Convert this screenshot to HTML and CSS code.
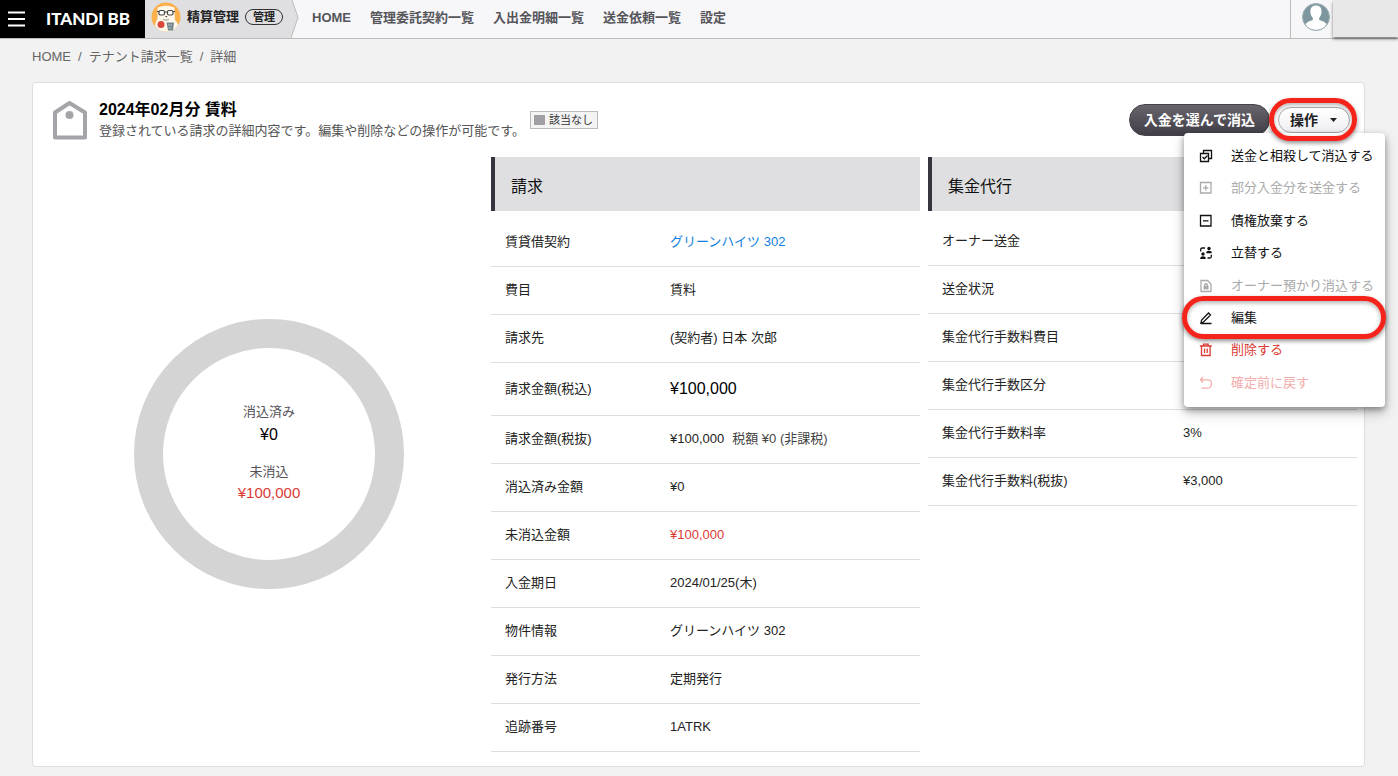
FILE: index.html
```html
<!DOCTYPE html>
<html lang="ja">
<head>
<meta charset="utf-8">
<meta name="viewport" content="width=device-width, initial-scale=1">
<title>テナント請求 詳細 | ITANDI BB</title>
<link rel="stylesheet" href="styles.css">
</head>
<body>
<header class="topbar">
  <div class="brand">
    <button class="burger" type="button" aria-label="メニュー"><svg width="17" height="16" viewBox="0 0 17 16" stroke="#fff" stroke-width="2"><path d="M0 1.5h17M0 8h17M0 14.5h17"/></svg></button>
    <a class="logo" href="#">ITANDI BB</a>
  </div>
  <div class="product">
    <svg width="30" height="30" viewBox="0 0 30 30" aria-hidden="true">
      <circle cx="15" cy="15" r="14.5" fill="#fbb04c"/>
      <path d="M6.500 8Q6 4.500 8.500 5Q15 2.500 21.500 5Q24 4.500 23.500 8L24 18Q27 21 27 23.500Q22 29.500 15 29.500Q8 29.500 4 24Q4 20 6.500 17Z" fill="#fdf8ea"/>
      <g fill="#fff" stroke="#444" stroke-width="1.200"><rect x="8" y="8.500" width="5.500" height="4.500" rx="1.500"/><rect x="16.500" y="8.500" width="5.500" height="4.500" rx="1.500"/><path d="M6 9.500h2M13.500 10h3M22 9.500h2"/></g>
      <path d="M14 14h2.500l-1.200 1.500z" fill="#444"/><path d="M12 17.500q3 1.500 6 0" fill="none" stroke="#999"/>
      <circle cx="10" cy="22.500" r="3.500" fill="#d9483b"/>
      <path d="M15.500 20.500h7.500l-1 8h-5z" fill="#71858c"/><path d="M17 23h4M17.500 26h3" stroke="#b9c4c8"/>
    </svg>
    <span class="product-name">精算管理</span>
    <span class="pill">管理</span>
  </div>
  <svg class="arrow" width="8" height="38" viewBox="0 0 8 38" aria-hidden="true"><path d="M0 0h1l6 17.500L0 38z" fill="#dfdfe2"/><path d="M1 0l6 17.500L0 38" fill="none" stroke="#bbb"/></svg>
  <nav class="nav">
    <a href="#">HOME</a><a href="#">管理委託契約一覧</a><a href="#">入出金明細一覧</a><a href="#">送金依頼一覧</a><a href="#">設定</a>
  </nav>
  <div class="user">
    <svg width="28" height="28" viewBox="0 0 28 28" aria-label="ユーザー"><defs><clipPath id="u"><circle cx="14" cy="14" r="13"/></clipPath></defs><circle cx="14" cy="14" r="13.500" fill="#7e979f"/><g clip-path="url(#u)" fill="#fff"><path d="M14 2.500c4 0 5.800 2.500 5.500 6.500-.2 3-1.200 4.500-2.300 6v2c3 1 7 2 7.800 5.500V28H3v-5.500C4 19 8 18 10.800 17v-2c-1.200-1.500-2.200-3-2.400-6C8.200 5 10 2.500 14 2.500z"/></g><circle cx="14" cy="14" r="13.500" fill="none" stroke="#9fb0b6"/></svg>
  </div>
  <div class="account"></div>
</header>

<main class="main">
  <nav class="crumbs" aria-label="パンくず"><a href="#">HOME</a><span>/</span><a href="#">テナント請求一覧</a><span>/</span><span>詳細</span></nav>

  <section class="card">
    <div class="card-head">
      <svg class="tag" width="36" height="40" viewBox="0 0 36 40" aria-hidden="true"><path d="M3 12.500L17.500 3 33 12.500V37.500H3z" fill="none" stroke="#a5a5a9" stroke-width="4" stroke-linejoin="round"/><circle cx="17.500" cy="15" r="4" fill="#a5a5a9"/></svg>
      <div>
        <h1>2024年02月分 賃料</h1>
        <p class="lead">登録されている請求の詳細内容です。編集や削除などの操作が可能です。</p>
      </div>
      <span class="status">該当なし</span>
      <div class="actions">
        <button class="primary" type="button">入金を選んで消込</button>
        <div class="dropdown">
          <button class="toggle" type="button" aria-haspopup="menu" aria-expanded="true">操作<svg width="7" height="4" viewBox="0 0 7 4"><path d="M0 0h7L3.500 4z" fill="#222"/></svg></button>
          <span class="ring ring-toggle"></span>
          <div class="menu">
            <div>
              <button type="button"><svg viewBox="0 0 14 14"><path d="M1.500 4.500h8v8h-8zM4.500 4V1.500h8v8H10"/><path d="M3.500 8l1.800 1.800L8.500 6.500"/></svg>送金と相殺して消込する</button>
              <button type="button" disabled><svg viewBox="0 0 14 14"><path d="M1.500 1.500h10.500v10.500H1.500zM6.800 4v5.500M4 6.800h5.500"/></svg>部分入金分を送金する</button>
            </div>
            <div>
              <button type="button"><svg viewBox="0 0 14 14"><path d="M1.500 1.500h10.500v10.500H1.500zM4 6.800h5.500"/></svg>債権放棄する</button>
              <button type="button"><svg viewBox="0 0 14 14"><g class="solid"><circle cx="4" cy="8" r="1.700"/><path d="M1.300 13v-1.500q2.700-2.300 5.400 0V13z"/><circle cx="10" cy="2.500" r="1.700"/><path d="M7.300 7.300V5.800q2.700-2.300 5.400 0v1.500z"/></g><path d="M1.700 5.500V3.500q0-1.500 1.500-1.500H6M12.300 8.800v1.700q0 1.500-1.500 1.500H8.500"/></svg>立替する</button>
            </div>
            <div>
              <button type="button" disabled><svg viewBox="0 0 14 14"><path d="M2 1.500h6.500l3.500 3.500v7.500H2zM5.700 7V5.500q1.300-1.500 2.600 0V7"/><path class="solid" d="M4.500 6.800h5V10.500h-5z"/></svg>オーナー預かり消込する</button>
              <button class="current" type="button"><svg viewBox="0 0 14 14"><path d="M2 12l.6-3L9.500 2l2 2-7 7zM2 12.500h10.500"/></svg>編集<span class="ring ring-item"></span></button>
              <button class="danger" type="button"><svg viewBox="0 0 14 14"><path d="M.8 3h12M4.500 3V1.200h4.600V3M2.500 3v9.500h8.600V3M5.500 5.500v4.500M8.200 5.500v4.500"/></svg>削除する</button>
            </div>
            <div>
              <button class="danger" type="button" disabled><svg viewBox="0 0 14 14"><path d="M4 1L1.500 3.800 4 6.500M1.500 3.800H9q3.500 0 3.500 4t-3.500 4.400H2.500"/></svg>確定前に戻す</button>
            </div>
          </div>
        </div>
      </div>
    </div>

    <div class="columns">
      <div class="chart">
        <div class="donut">
          <div class="dlabel">消込済み</div>
          <div class="dvalue">¥0</div>
          <div class="dlabel second">未消込</div>
          <div class="drest">¥100,000</div>
        </div>
      </div>
      <section class="billing">
        <h2>請求</h2>
        <table>
          <tr><th scope="row">賃貸借契約</th><td><a class="link" href="#">グリーンハイツ 302</a></td></tr>
          <tr><th scope="row">費目</th><td>賃料</td></tr>
          <tr><th scope="row">請求先</th><td>(契約者) 日本 次郎</td></tr>
          <tr class="total"><th scope="row">請求金額(税込)</th><td>¥100,000</td></tr>
          <tr><th scope="row">請求金額(税抜)</th><td>¥100,000<span class="tax">税額 ¥0 (非課税)</span></td></tr>
          <tr><th scope="row">消込済み金額</th><td>¥0</td></tr>
          <tr><th scope="row">未消込金額</th><td class="red">¥100,000</td></tr>
          <tr><th scope="row">入金期日</th><td>2024/01/25(木)</td></tr>
          <tr><th scope="row">物件情報</th><td>グリーンハイツ 302</td></tr>
          <tr><th scope="row">発行方法</th><td>定期発行</td></tr>
          <tr><th scope="row">追跡番号</th><td>1ATRK</td></tr>
        </table>
      </section>
      <section class="agency">
        <h2>集金代行</h2>
        <table>
          <tr><th scope="row">オーナー送金</th><td></td></tr>
          <tr><th scope="row">送金状況</th><td></td></tr>
          <tr><th scope="row">集金代行手数料費目</th><td></td></tr>
          <tr><th scope="row">集金代行手数区分</th><td></td></tr>
          <tr><th scope="row">集金代行手数料率</th><td>3%</td></tr>
          <tr><th scope="row">集金代行手数料(税抜)</th><td>¥3,000</td></tr>
        </table>
      </section>
    </div>
  </section>
</main>
</body>
</html>
```

FILE: styles.css
```css
* { box-sizing: border-box; }
body {
  margin: 0;
  background: #f2f2f2;
  color: #222;
  font: 13px/18px "Liberation Sans", "Noto Sans CJK JP", sans-serif;
}
a { color: inherit; text-decoration: none; }
button { font: inherit; color: inherit; border: 0; background: none; padding: 0; cursor: pointer; }
h1, h2, p { margin: 0; }
svg { display: block; flex: none; }

.topbar {
  display: flex;
  height: 39px;
  background: #f7f7fa;
  border-bottom: 1px solid #bbb;
}
.brand {
  display: flex;
  align-items: center;
  gap: 21px;
  width: 145px;
  padding: 0 0 1px 8px;
  background: #000;
}
.logo { color: #fff; font: 900 17px/20px Lato, sans-serif; white-space: nowrap; }
.product {
  display: flex;
  align-items: center;
  gap: 6px;
  padding: 0 8px 4px 6px;
  background: #dfdfe2;
  font-weight: 700;
  color: #222;
  white-space: nowrap;
}
.pill {
  padding: 0 7px;
  border: 1px solid #333;
  border-radius: 8px;
  font-size: 11px;
  line-height: 14px;
}
.nav {
  display: flex;
  align-items: center;
  gap: 19px;
  padding: 0 0 3px 13px;
  font-weight: 700;
  color: #55555a;
  white-space: nowrap;
}
.user {
  margin-left: auto;
  padding: 3px 3px 0 11px;
  border-left: 1px solid #bbb;
}
.account { width: 65px; height: 37px; background: #e8e8e8; box-shadow: 0 2px 3px rgba(0, 0, 0, .5); }

.main { padding: 0 33px 8px 32px; }
.crumbs { display: flex; gap: 7px; padding: 9px 0 16px; color: #666; }

.card {
  background: #fff;
  border: 1px solid #ddd;
  border-radius: 4px;
  padding-bottom: 14px;
}
.card-head { display: flex; height: 74px; padding: 17px 14px 0 19px; white-space: nowrap; }
.tag { margin-right: 11px; }
h1 { font-size: 16px; line-height: 20px; color: #000; }
.lead { line-height: 22px; color: #555; }
.status {
  display: flex;
  align-items: center;
  gap: 4px;
  height: 18px;
  margin: 11px 0 0 5px;
  padding: 0 4px 0 3px;
  background: #f4f4f5;
  border: 1px solid #bbb;
  font-size: 11px;
  color: #333;
}
.status::before { content: ""; width: 11px; height: 10px; background: #a0a0a5; }

.actions { display: flex; align-items: center; gap: 8px; height: 32px; margin: 4px 0 0 auto; }
.primary {
  height: 32px;
  padding: 0 14px 1px;
  border-radius: 16px;
  background: linear-gradient(#68656d, #413e47);
  border: 1px solid #45424a;
  color: #fff;
  font-size: 14px;
  font-weight: 700;
}
.dropdown { position: relative; }
.toggle {
  display: flex;
  align-items: center;
  gap: 12px;
  height: 26px;
  padding: 0 12px 1px 11px;
  border: 1px solid #aaa;
  border-radius: 13px;
  background: linear-gradient(#fff, #f0f0f4);
  font-size: 14px;
  font-weight: 700;
}
.ring {
  position: absolute;
  z-index: 2;
  border: 5px solid #f5241b;
  border-radius: 22px;
  box-shadow: 0 2px 4px rgba(0, 0, 0, .45), inset 0 2px 4px rgba(0, 0, 0, .3);
  pointer-events: none;
}
.ring-toggle { inset: -9px -7px -8px -9px; }
.ring-item { inset: -5px -1px -6px -2px; }
.menu {
  position: absolute;
  z-index: 1;
  top: 26px;
  right: -35px;
  display: grid;
  gap: 1px;
  width: 201px;
  padding: 6px 0 9px;
  background: #fff;
  border-radius: 4px;
  box-shadow: 0 3px 6px rgba(0, 0, 0, .35), 0 6px 14px rgba(0, 0, 0, .2);
}
.menu button {
  position: relative;
  display: flex;
  align-items: center;
  gap: 18px;
  width: 100%;
  height: 32px;
  padding: 2px 0 0 15px;
  color: #111;
}
.menu svg { width: 14px; height: 14px; fill: none; stroke: currentColor; stroke-width: 1.3; }
.menu .solid { fill: currentColor; stroke: none; }
.menu button:disabled { color: #aaa; }
.menu .danger { color: #dc3a34; }
.menu .danger:disabled { color: #f2aeac; }

.columns { display: grid; grid-template-columns: 450fr 429fr 429fr; gap: 8px; padding-right: 7px; }
.chart { display: flex; align-items: center; justify-content: center; padding: 0 0 2px 22px; }
.donut {
  width: 270px;
  height: 270px;
  padding-top: 54px;
  border: 29px solid #d4d4d4;
  border-radius: 50%;
  text-align: center;
}
.dlabel { line-height: 20px; color: #55525a; }
.dvalue { font-size: 16px; line-height: 26px; color: #000; }
.second { margin-top: 14px; }
.drest { font-size: 15px; line-height: 22px; color: #dc3a34; }
h2 {
  height: 54px;
  padding: 5px 0 0 16px;
  border-left: 4px solid #36343f;
  background: #dfdfe1;
  font-size: 16px;
  font-weight: 400;
  line-height: 50px;
  color: #111;
}
table { width: 100%; border-collapse: separate; border-spacing: 0; table-layout: fixed; }
.billing table { margin-top: 8px; }
.agency table { margin-top: 7px; }
th, td { height: 48px; padding: 0 0 2px; border-bottom: 1px solid #ddd; font-weight: 400; text-align: left; }
th { padding-left: 14px; }
.billing th { width: 179px; }
.agency th { width: 255px; }
.total th, .total td { height: 53px; padding-bottom: 0; }
.total td { font-size: 16px; color: #000; }
.link { color: #1080e0; }
.tax { margin-left: 8px; color: #444; }
.red { color: #dc3a34; }
```
